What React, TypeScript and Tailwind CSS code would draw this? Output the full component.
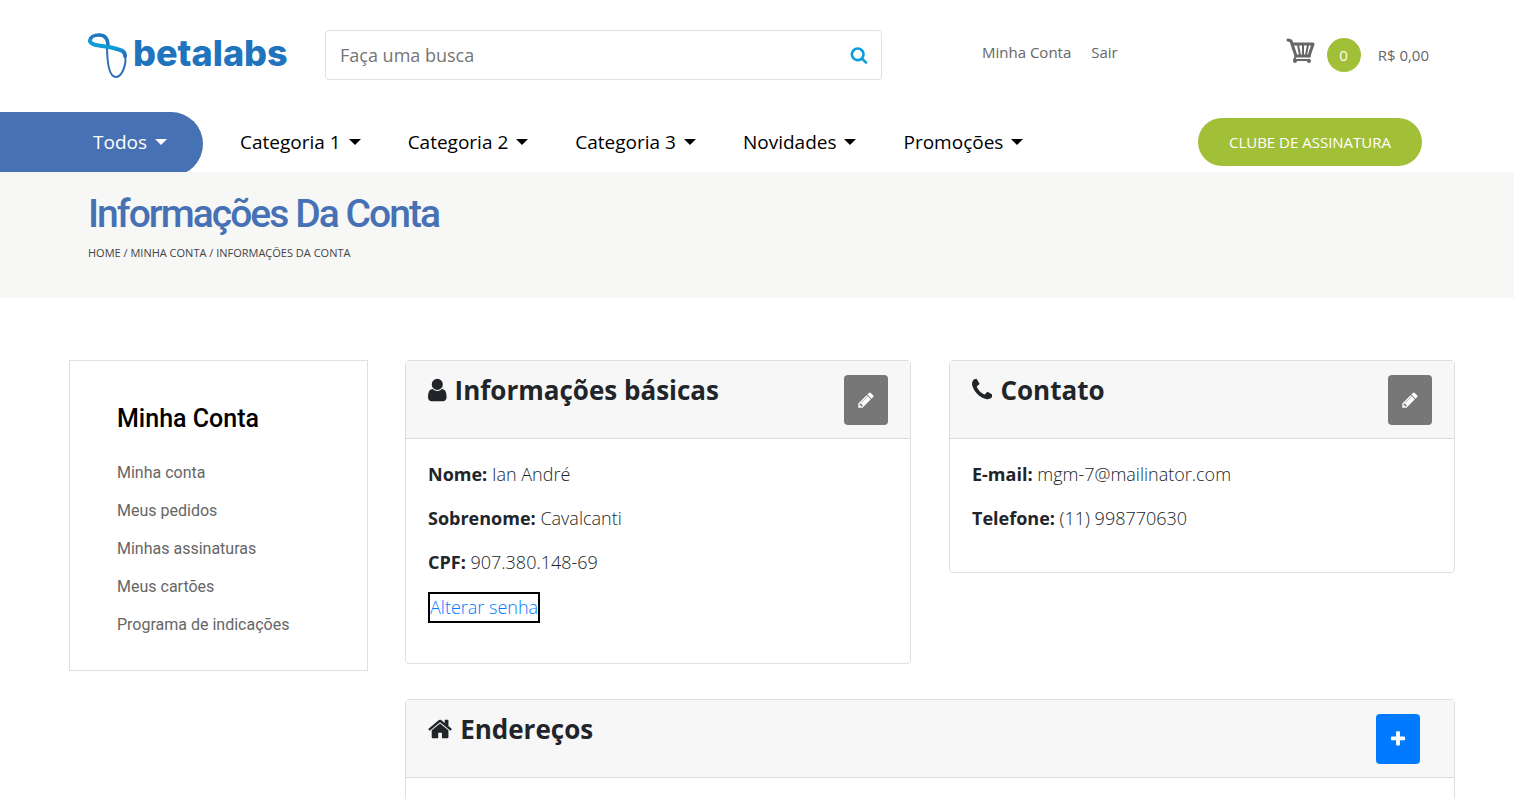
import type { ReactNode } from "react";

const icons = {
  user: {
    box: "256 0 1280 1792",
    path: "M1536 1399q0 109-62.5 187t-150.5 78h-854q-88 0-150.5-78t-62.5-187q0-85 8.5-160.5t31.5-152 58.5-131 94-89 134.5-34.5q131 128 313 128t313-128q76 0 134.5 34.5t94 89 58.5 131 31.5 152 8.5 160.5zm-256-887q0 159-112.5 271.5t-271.5 112.5-271.5-112.5-112.5-271.5 112.5-271.5 271.5-112.5 271.5 112.5 112.5 271.5z",
  },
  phone: {
    box: "192 0 1408 1792",
    path: "M1600 1240q0 27-10 70.5t-21 68.5q-21 50-122 106-94 51-186 51-27 0-52.5-3.5t-57.5-12.5-47.5-14.5-55.5-20.5-49-18q-98-35-175-83-128-79-264.5-215.5t-215.5-264.5q-48-77-83-175-3-9-18-49t-20.5-55.5-14.5-47.5-12.5-57.5-3.5-52.5q0-92 51-186 56-101 106-122 25-11 68.5-21t70.5-10q14 0 21 3 18 6 53 76 11 19 30 54t35 63.5 31 53.5q3 4 17.5 25t21.5 35.5 7 28.5q0 20-28.5 50t-62 55-62 53-28.5 46q0 9 5 22.5t8.5 20.5 14 24 11.5 19q76 137 174 235t235 174q2 1 19 11.5t24 14 20.5 8.5 22.5 5q18 0 46-28.5t53-62 55-62 50-28.5q14 0 28.5 7t35.5 21.5 25 17.5q25 15 53.5 31t63.5 35 54 30q70 35 76 53 3 7 3 21z",
  },
  home: {
    box: "64 0 1664 1792",
    path: "M1472 992v480q0 26-19 45t-45 19h-384v-384h-256v384h-384q-26 0-45-19t-19-45v-480q0-1 .5-3t.5-3l575-474 575 474q1 2 1 6zm223-69l-62 74q-8 9-21 11h-3q-13 0-21-7l-692-577-692 577q-12 8-24 7-13-2-21-11l-62-74q-8-10-7-23.5t11-21.5l719-599q32-26 76-26t76 26l244 204v-195q0-14 9-23t23-9h192q14 0 23 9t9 23v408l219 182q10 8 11 21.5t-7 23.5z",
  },
  pencil: {
    box: "0 0 1792 1792",
    path: "M491 1536l91-91-235-235-91 91v107h128v128h107zm523-928q0-22-22-22-10 0-17 7l-542 542q-7 7-7 17 0 22 22 22 10 0 17-7l542-542q7-7 7-17zm-54-192l416 416-832 832h-416v-416zm683 96q0 53-37 90l-166 166-416-416 166-165q36-38 90-38 53 0 91 38l235 234q37 39 37 91z",
  },
  plus: {
    box: "0 0 1792 1792",
    path: "M1600 736v192q0 40-28 68t-68 28h-416v416q0 40-28 68t-68 28h-192q-40 0-68-28t-28-68v-416h-416q-40 0-68-28t-28-68v-192q0-40 28-68t68-28h416v-416q0-40 28-68t68-28h192q40 0 68 28t28 68v416h416q40 0 68 28t28 68z",
  },
  search: {
    box: "0 0 1792 1792",
    path: "M1216 832q0-185-131.5-316.5t-316.5-131.5-316.5 131.5-131.5 316.5 131.5 316.5 316.5 131.5 316.5-131.5 131.5-316.5zm512 832q0 52-38 90t-90 38q-54 0-90-38l-343-342q-179 124-399 124-143 0-273.5-55.5t-225-150-150-225-55.5-273.5 55.5-273.5 150-225 225-150 273.5-55.5 273.5 55.5 225 150 150 225 55.5 273.5q0 220-124 399l343 343q37 37 37 90z",
  },
};

const categories = ["Categoria 1", "Categoria 2", "Categoria 3", "Novidades", "Promoções"];

const accountLinks = [
  "Minha conta",
  "Meus pedidos",
  "Minhas assinaturas",
  "Meus cartões",
  "Programa de indicações",
];

function Icon({ name, className }: { name: keyof typeof icons; className: string }) {
  return (
    <svg viewBox={icons[name].box} fill="currentColor" aria-hidden="true" className={className}>
      <path d={icons[name].path} />
    </svg>
  );
}

function Caret() {
  return <span className="border-x-6 border-t-6 border-x-transparent border-t-current" />;
}

function Logo() {
  return (
    <a href="#" className="mt-[3px] flex w-[200px] shrink-0 items-start gap-1 text-[#2074bd]">
      <svg viewBox="0 0 41 46" fill="none" aria-hidden="true" className="h-[46px] w-[41px] shrink-0">
        <defs>
          <linearGradient id="ribbon" x1="0" y1="0" x2="1" y2="1">
            <stop offset="0" stopColor="#0e9bd8" />
            <stop offset="0.6" stopColor="#0e9bd8" />
            <stop offset="1" stopColor="#2a6cb5" />
          </linearGradient>
        </defs>
        <path
          d="M37 22C39 31 34 44 28 44C21 44 19 29 19 12"
          stroke="#2a6cb5"
          strokeWidth="2"
          strokeLinecap="round"
        />
        <path
          d="M20 13C20 6 17 2 11 2C6 2 2 4 2 8"
          stroke="#1c78c0"
          strokeWidth="3.5"
          strokeLinecap="round"
        />
        <path
          d="M2 8C3 14 20 12 32 17C36 18 37 20 37 23"
          stroke="url(#ribbon)"
          strokeWidth="4"
          strokeLinecap="round"
        />
      </svg>
      <span className="font-[Inter,sans-serif] text-4xl font-extrabold">betalabs</span>
    </a>
  );
}

function CartIcon() {
  return (
    <svg
      viewBox="0 0 29 26"
      fill="none"
      stroke="#666"
      strokeWidth="2"
      strokeLinecap="round"
      strokeLinejoin="round"
      aria-hidden="true"
      className="h-[26px] w-[29px]"
    >
      <path d="M2 2L5 3L10 18H23" strokeWidth="3" />
      <path d="M7 6H27L23 18" strokeWidth="3" />
      <path d="M12 7L14 17M17 7V17M22 7L20 17" />
      <path d="M10 18L8 22H23" />
      <circle cx="9" cy="23" r="2" fill="#666" stroke="none" />
      <circle cx="23" cy="23" r="2" fill="#666" stroke="none" />
    </svg>
  );
}

function Card({
  title,
  icon,
  action,
  children,
}: {
  title: string;
  icon: keyof typeof icons;
  action: ReactNode;
  children?: ReactNode;
}) {
  return (
    <section className="rounded border border-[#dfdfdf] bg-white">
      <div className="flex items-start justify-between border-b border-[#dadada] bg-[#f7f7f7] px-[22px] pt-[14px] pb-[13px]">
        <h2 className="flex items-center gap-2 text-[26px] leading-[30px] font-bold">
          <Icon name={icon} className="h-[26px] w-auto" />
          {title}
        </h2>
        {action}
      </div>
      <div className="min-h-24 px-[22px] pt-[21px] pb-10">{children}</div>
    </section>
  );
}

function EditButton({ label }: { label: string }) {
  return (
    <button
      type="button"
      aria-label={label}
      className="flex h-[50px] w-11 items-center justify-center rounded bg-[#777] text-white"
    >
      <Icon name="pencil" className="size-[18px]" />
    </button>
  );
}

function Field({ label, value }: { label: string; value: string }) {
  return (
    <p className="mb-4 text-lg leading-7 font-light last:mb-0">
      <strong className="font-bold">{label}:</strong> {value}
    </p>
  );
}

export default function App() {
  return (
    <div className="min-h-screen bg-white font-['Open_Sans',sans-serif] text-[#212529]">
      <header>
        <div className="flex h-28 items-start pt-[30px] pr-[85px] pl-[88px] text-[15px] text-[#666]">
          <Logo />
          <form className="ml-[37px] flex h-[50px] max-w-[557px] grow items-center rounded border border-[#dfdfdf] pr-[13px] pl-[14px]">
            <input
              type="text"
              aria-label="Busca"
              placeholder="Faça uma busca"
              className="min-w-0 grow text-lg outline-none placeholder:text-[#757575]"
            />
            <button type="submit" aria-label="Buscar" className="text-[#0c9ddb]">
              <Icon name="search" className="size-[18px]" />
            </button>
          </form>
          <nav className="ml-[100px] flex h-11 items-center gap-5">
            <a href="#">Minha Conta</a>
            <a href="#">Sair</a>
          </nav>
          <a href="#" className="ml-auto flex h-[50px] items-center">
            <span className="-mt-2">
              <CartIcon />
            </span>
            <span className="mr-[17px] ml-3 flex size-[34px] items-center justify-center rounded-full bg-[#a2c037] text-white">
              0
            </span>
            R$ 0,00
          </a>
        </div>

        <nav className="flex h-15 items-start overflow-hidden pr-[92px] text-[19px] text-black">
          <a
            href="#"
            className="flex h-16 w-[203px] shrink-0 items-center gap-2 rounded-r-full bg-[#4671b5] pb-1 pl-[93px] text-white"
          >
            Todos <Caret />
          </a>
          <ul className="ml-[37px] flex h-15 items-center gap-[47px]">
            {categories.map((name) => (
              <li key={name}>
                <a href="#" className="flex items-center gap-2">
                  {name} <Caret />
                </a>
              </li>
            ))}
          </ul>
          <a
            href="#"
            className="mt-[6px] ml-auto flex h-12 w-56 items-center justify-center rounded-full bg-[#a2c037] text-[15px] text-white"
          >
            CLUBE DE ASSINATURA
          </a>
        </nav>
      </header>

      <div className="h-[126px] bg-[#f7f7f5] pt-[18px] pl-[88px]">
        <h1 className="font-[Roboto,sans-serif] text-[39px] leading-12 font-medium tracking-tighter text-[#4671b5]">
          Informações Da Conta
        </h1>
        <p className="mt-1 text-[11px] leading-[22px] text-[#444]">
          <a href="#">HOME</a> / <a href="#">MINHA CONTA</a> / INFORMAÇÕES DA CONTA
        </p>
      </div>

      <main className="flex items-start gap-[37px] pt-[62px] pr-[59px] pb-10 pl-[69px]">
        <aside className="w-[299px] shrink-0 border border-[#dfdfdf] px-[47px] pt-[42px] pb-[26px] font-[Roboto,sans-serif]">
          <h2 className="mb-[19px] text-[25px] leading-8 font-medium text-black">Minha Conta</h2>
          <ul className="text-base text-[#666]">
            {accountLinks.map((name) => (
              <li key={name} className="leading-[38px]">
                <a href="#">{name}</a>
              </li>
            ))}
          </ul>
        </aside>

        <div className="grow">
          <div className="mb-[35px] grid grid-cols-2 items-start gap-[38px]">
            <Card
              title="Informações básicas"
              icon="user"
              action={<EditButton label="Editar informações básicas" />}
            >
              <Field label="Nome" value="Ian André" />
              <Field label="Sobrenome" value="Cavalcanti" />
              <Field label="CPF" value="907.380.148-69" />
              <a
                href="#"
                className="inline-block border-2 border-black text-lg leading-[27px] font-light text-[#007bff]"
              >
                Alterar senha
              </a>
            </Card>
            <Card title="Contato" icon="phone" action={<EditButton label="Editar contato" />}>
              <Field label="E-mail" value="mgm-7@mailinator.com" />
              <Field label="Telefone" value="(11) 998770630" />
            </Card>
          </div>
          <Card
            title="Endereços"
            icon="home"
            action={
              <button
                type="button"
                aria-label="Adicionar endereço"
                className="mr-3 flex h-[50px] w-11 items-center justify-center rounded bg-[#007bff] text-white"
              >
                <Icon name="plus" className="size-[18px]" />
              </button>
            }
          />
        </div>
      </main>
    </div>
  );
}
